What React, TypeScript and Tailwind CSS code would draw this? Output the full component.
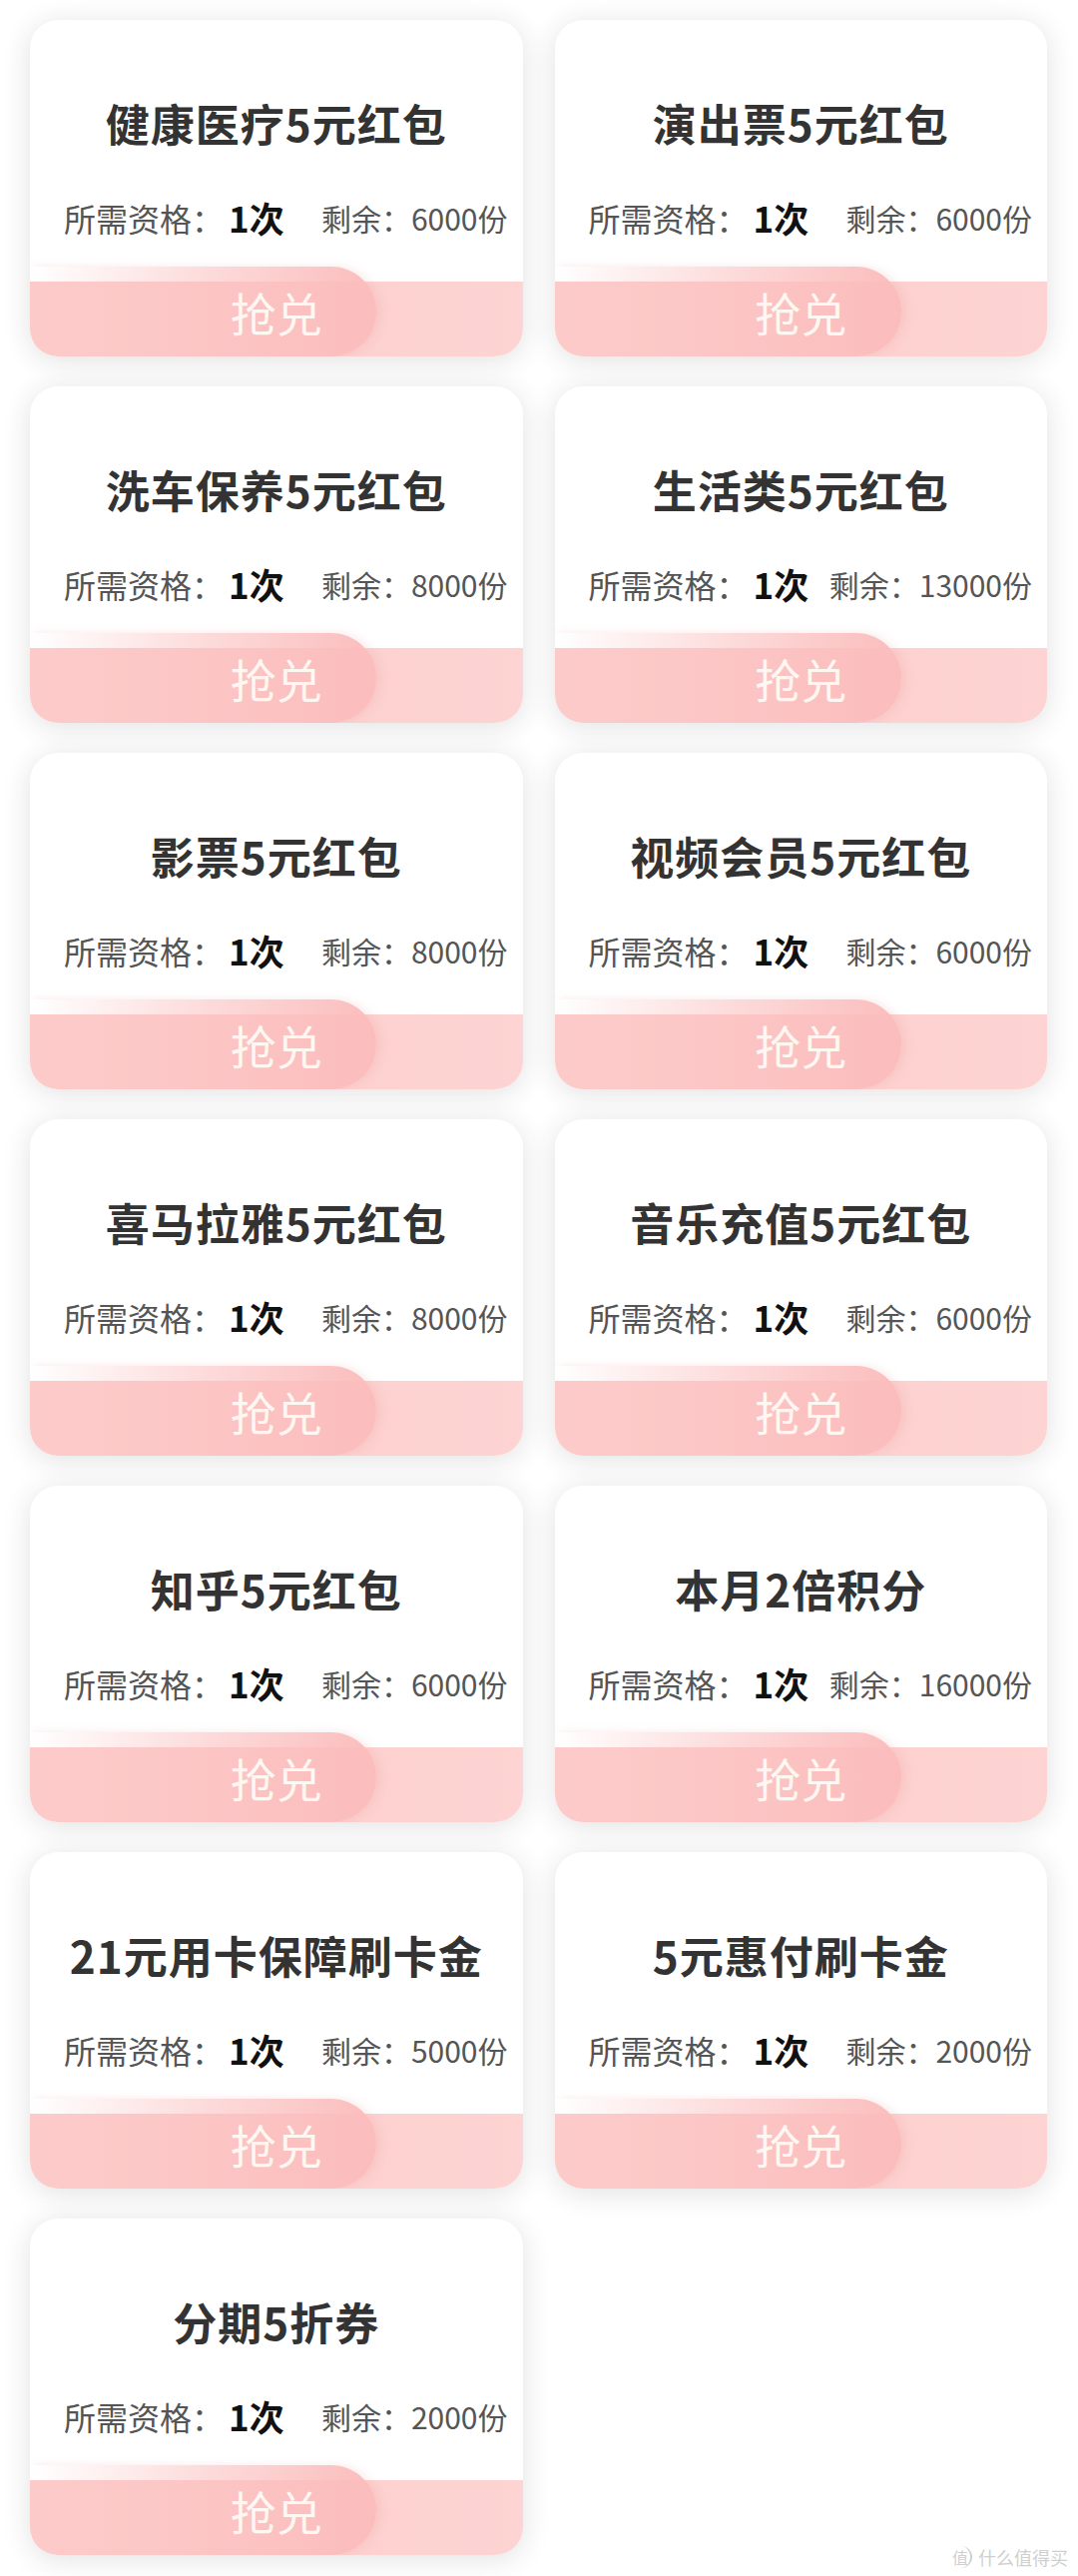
const font = '[font-family:"Noto_Sans_CJK_SC","Noto_Sans",sans-serif]';

type Coupon = {
	title: string;
	left: number;
};

const coupons: Coupon[] = [
	{ title: '健康医疗5元红包', left: 6000 },
	{ title: '演出票5元红包', left: 6000 },
	{ title: '洗车保养5元红包', left: 8000 },
	{ title: '生活类5元红包', left: 13000 },
	{ title: '影票5元红包', left: 8000 },
	{ title: '视频会员5元红包', left: 6000 },
	{ title: '喜马拉雅5元红包', left: 8000 },
	{ title: '音乐充值5元红包', left: 6000 },
	{ title: '知乎5元红包', left: 6000 },
	{ title: '本月2倍积分', left: 16000 },
	{ title: '21元用卡保障刷卡金', left: 5000 },
	{ title: '5元惠付刷卡金', left: 2000 },
	{ title: '分期5折券', left: 2000 },
];

function CouponCard({ title, left }: Coupon) {
	return (
		<div className="h-[337px] rounded-[28px] bg-white shadow-[0_4px_28px_rgba(60,40,40,0.14)] overflow-hidden flex flex-col">
			<p className="pt-[78px] text-center text-[44px] leading-[50px] font-bold text-[#333] tracking-[1px]">
				{title}
			</p>
			<div className="mt-[50px] h-[40px] pl-[34px] pr-[15px] flex items-center justify-between">
				<div className="flex items-center">
					<span className="text-[32px] text-[#555]">所需资格：</span>
					<span className="ml-[5px] text-[35px] font-bold text-[#111]">1次</span>
				</div>
				<span className="text-[30px] text-[#555]">剩余：{left}份</span>
			</div>
			<div className="mt-[29px] h-[90px] grid">
				<div className="col-start-1 row-start-1 self-end h-[75px] bg-gradient-to-r from-[#fccbc9] to-[#fdd4d3]" />
				<div className="col-start-1 row-start-1 w-[347px] rounded-r-full bg-gradient-to-r from-[rgba(251,190,190,0)] via-[rgba(251,190,190,0.55)] to-[#fbbcbc] shadow-[4px_0_10px_rgba(230,140,140,0.18)]" />
				<div className="col-start-1 row-start-1 flex items-center justify-center">
					<span className="text-[46px] leading-none text-[#fff7f2]">抢兑</span>
				</div>
			</div>
		</div>
	);
}

export default function App() {
	return (
		<div className={`relative h-[2580px] w-[1080px] bg-white ${font}`}>
			<div className="pt-[20px] pl-[30px] pr-[31px] grid grid-cols-2 gap-x-[32px] gap-y-[30px]">
				{coupons.map((c, i) => (
					<CouponCard key={i} {...c} />
				))}
			</div>
			<div className="absolute right-[10px] bottom-[8px] flex items-center gap-[6px] text-[#cfcfcf]">
				<span className="w-[22px] h-[22px] rounded-full border-r-2 border-[#d0d0d0] flex items-center justify-center text-[16px] leading-none">
					值
				</span>
				<span className="text-[18px] leading-none">什么值得买</span>
			</div>
		</div>
	);
}
